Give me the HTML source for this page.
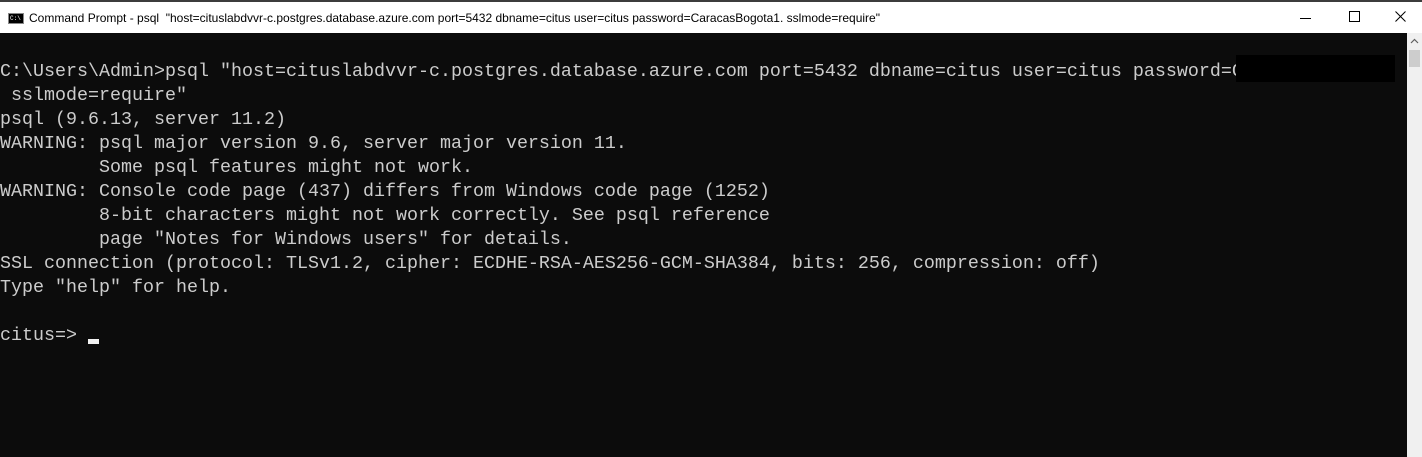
<!DOCTYPE html>
<html><head><meta charset="utf-8"><style>
html,body{margin:0;padding:0;width:1422px;height:457px;overflow:hidden;background:#0c0c0c}
.top{position:absolute;left:0;top:0;width:1422px;height:2px;background:#3c3c3c}
.title{position:absolute;left:0;top:2px;width:1422px;height:31px;background:#fff;font-family:"Liberation Sans",sans-serif;font-size:12px;color:#000}
.title .t{position:absolute;left:29px;top:9px;white-space:pre}
.icon{position:absolute;left:8px;top:11px;width:16px;height:11px;background:#000;border:1px solid #888;box-sizing:border-box}
.icon span{position:absolute;left:1px;top:1px;font-size:6px;color:#fff;line-height:7px;font-family:"Liberation Mono",monospace}
.term{position:absolute;left:0;top:60px;font-family:"Liberation Mono",monospace;font-size:18.33px;line-height:24px;color:#cccccc;white-space:pre}
.redact{position:absolute;left:1236px;top:55px;width:159px;height:27px;background:#000}
.sb{position:absolute;left:1407px;top:33px;width:15px;height:424px;background:#f0f0f0}
.thumb{position:absolute;left:1409px;top:50px;width:11px;height:17px;background:#cdcdcd}
.cursor{position:absolute;left:88px;top:339px;width:11px;height:5px;background:#f2f2f2}
</style></head><body>
<div class="top"></div>
<div class="title"><div class="icon"><span>C:\</span></div><div class="t">Command Prompt - psql  "host=cituslabdvvr-c.postgres.database.azure.com port=5432 dbname=citus user=citus password=CaracasBogota1. sslmode=require"</div>
<svg style="position:absolute;left:1300px;top:10px" width="12" height="12"><line x1="0" y1="6.5" x2="11" y2="6.5" stroke="#000" stroke-width="1"/></svg>
<svg style="position:absolute;left:1349px;top:9px" width="12" height="12"><rect x="0.5" y="0.5" width="10" height="10" fill="none" stroke="#000"/></svg>
<svg style="position:absolute;left:1395px;top:9px" width="12" height="12"><path d="M0.5 0.5L10.5 10.5M10.5 0.5L0.5 10.5" stroke="#000" stroke-width="1"/></svg>
</div>
<div class="term">C:\Users\Admin&gt;psql "host=cituslabdvvr-c.postgres.database.azure.com port=5432 dbname=citus user=citus password=CaracasBogota1.
 sslmode=require"
psql (9.6.13, server 11.2)
WARNING: psql major version 9.6, server major version 11.
         Some psql features might not work.
WARNING: Console code page (437) differs from Windows code page (1252)
         8-bit characters might not work correctly. See psql reference
         page "Notes for Windows users" for details.
SSL connection (protocol: TLSv1.2, cipher: ECDHE-RSA-AES256-GCM-SHA384, bits: 256, compression: off)
Type "help" for help.

citus=&gt;</div>
<div class="redact"></div>
<div class="cursor"></div>
<div class="sb"></div>
<svg style="position:absolute;left:1410px;top:38px" width="9" height="6"><path d="M1 5L4.5 1.5L8 5" fill="none" stroke="#606060" stroke-width="1.2"/></svg>
<div class="thumb"></div>
</body></html>
